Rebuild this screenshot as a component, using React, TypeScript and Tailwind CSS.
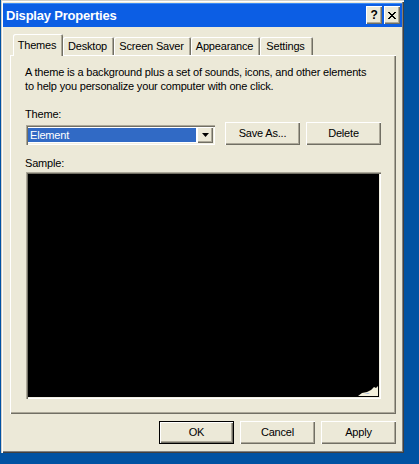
import React from "react";

const raised =
  "bg-[#ece9d8] shadow-[inset_1px_1px_0_#ffffff,inset_-1px_-1px_0_#716f64,inset_-2px_-2px_0_#aca899]";
const sunken =
  "shadow-[inset_1px_1px_0_#aca899,inset_2px_2px_0_#716f64,inset_-1px_-1px_0_#ffffff,inset_-2px_-2px_0_#f1efe2]";

function CapBtn({ children, className = "" }: { children: React.ReactNode; className?: string }) {
  return (
    <div
      className={`w-[16px] h-[18px] flex items-center justify-center ${raised} ${className}`}
    >
      {children}
    </div>
  );
}

function Btn({ label, def = false }: { label: string; def?: boolean }) {
  if (def) {
    return (
      <div className="w-[75px] h-[23px] border border-black">
        <div className={`w-full h-full flex items-center justify-center ${raised}`}>{label}</div>
      </div>
    );
  }
  return (
    <div className={`w-[75px] h-[23px] flex items-center justify-center ${raised}`}>{label}</div>
  );
}

function Tab({ label, w, selected = false }: { label: string; w: string; selected?: boolean }) {
  if (selected) {
    return (
      <div
        className={`${w} h-[22px] mb-[-1px] relative z-10 bg-[#ece9d8] rounded-t-[2px] flex justify-center pt-[4px] pr-[2px] shadow-[inset_1px_1px_0_#ffffff,inset_-1px_0_0_#716f64,inset_-2px_0_0_#aca899]`}
      >
        <span className="leading-[14px]">{label}</span>
      </div>
    );
  }
  return (
    <div
      className={`${w} h-[18px] bg-[#ece9d8] rounded-t-[2px] flex justify-center pt-[2px] pr-[2px] shadow-[inset_1px_1px_0_#ffffff,inset_-1px_0_0_#716f64,inset_-2px_0_0_#aca899]`}
    >
      <span className="leading-[14px]">{label}</span>
    </div>
  );
}

export default function App() {
  return (
    <div className="w-[419px] h-[464px] bg-[#0152a2] overflow-hidden font-['Liberation_Sans',Arial,sans-serif] text-[11px] tracking-[-0.18px] text-black">
      <div className="ml-px w-[403px] h-[453px] bg-[#ece9d8] flex flex-col px-[2px] pt-[3px] shadow-[inset_1px_1px_0_#d4d0c8,inset_2px_2px_0_#ffffff,inset_-1px_-1px_0_#404040,inset_-2px_-2px_0_#808080]">
        {/* Title bar */}
        <div className="h-[24px] shrink-0 bg-[#0c5ee4] flex items-center pl-[3px] pr-[2px] shadow-[inset_0_1px_0_#3b8af5]">
          <span className="flex-1 text-white font-bold text-[13px] tracking-[-0.2px] leading-none">
            Display Properties
          </span>
          <CapBtn>
            <span className="font-bold text-[12px] leading-none">?</span>
          </CapBtn>
          <CapBtn className="ml-[2px]">
            <svg width="8" height="7" viewBox="0 0 8 7">
              <path
                d="M0 0h2v1h1v1h2V1h1V0h2v1H7v1H6v1H5v1h1v1h1v1h1v1H6V6H5V5H3v1H2v1H0V6h1V5h1V4h1V3H2V2H1V1H0z"
                fill="#000"
              />
            </svg>
          </CapBtn>
        </div>

        {/* Body */}
        <div className="pl-[7px] flex flex-col">
          {/* Tabs */}
          <div className="mt-[7px] h-[21px] flex items-end pl-[3px]">
            <Tab label="Themes" w="w-[50px]" selected />
            <Tab label="Desktop" w="w-[51px]" />
            <Tab label="Screen Saver" w="w-[77px]" />
            <Tab label="Appearance" w="w-[69px]" />
            <Tab label="Settings" w="w-[53px]" />
          </div>

          {/* Panel */}
          <div className="w-[386px] h-[359px] flex flex-col pl-[15px] pt-[10px] shadow-[inset_1px_1px_0_#ffffff,inset_-1px_-1px_0_#716f64,inset_-2px_-2px_0_#aca899]">
            <p className="leading-[14px]">
              A theme is a background plus a set of sounds, icons, and other elements
              <br />
              to help you personalize your computer with one click.
            </p>
            <div className="mt-[14px] leading-[14px]">Theme:</div>
            <div className="mt-[1px] ml-px flex items-end">
              <div className={`w-[189px] h-[20px] bg-white p-[2px] flex ${sunken}`}>
                <div className="flex-1 h-[14px] mt-px mr-px bg-[#316ac5] text-white leading-[14px] pl-[2px]">
                  Element
                </div>
                <div className={`w-[16px] h-[16px] flex items-center justify-center ${raised}`}>
                  <svg width="7" height="4" viewBox="0 0 7 4">
                    <path d="M0 0h7L3.5 4z" fill="#000" />
                  </svg>
                </div>
              </div>
              <div className="ml-[10px]">
                <Btn label="Save As..." />
              </div>
              <div className="ml-[6px]">
                <Btn label="Delete" />
              </div>
            </div>
            <div className="mt-[11px] leading-[14px]">Sample:</div>
            <div className={`mt-[2px] ml-px w-[355px] h-[227px] bg-black relative ${sunken}`}>
              <svg
                className="absolute right-[3px] bottom-[3px]"
                width="20"
                height="12"
                viewBox="0 0 20 12"
              >
                <path d="M0 12 L4 9 L9 8 L13 6 L16 3 L18 4 L20 2 L20 12 Z" fill="#f3f0dc" />
                <path d="M6 10 L10 9 L12 10 Z" fill="#9fb4d8" />
              </svg>
            </div>
          </div>

          {/* Bottom buttons */}
          <div className="w-[386px] mt-[7px] flex justify-end gap-[6px]">
            <Btn label="OK" def />
            <Btn label="Cancel" />
            <Btn label="Apply" />
          </div>
        </div>
      </div>
    </div>
  );
}
